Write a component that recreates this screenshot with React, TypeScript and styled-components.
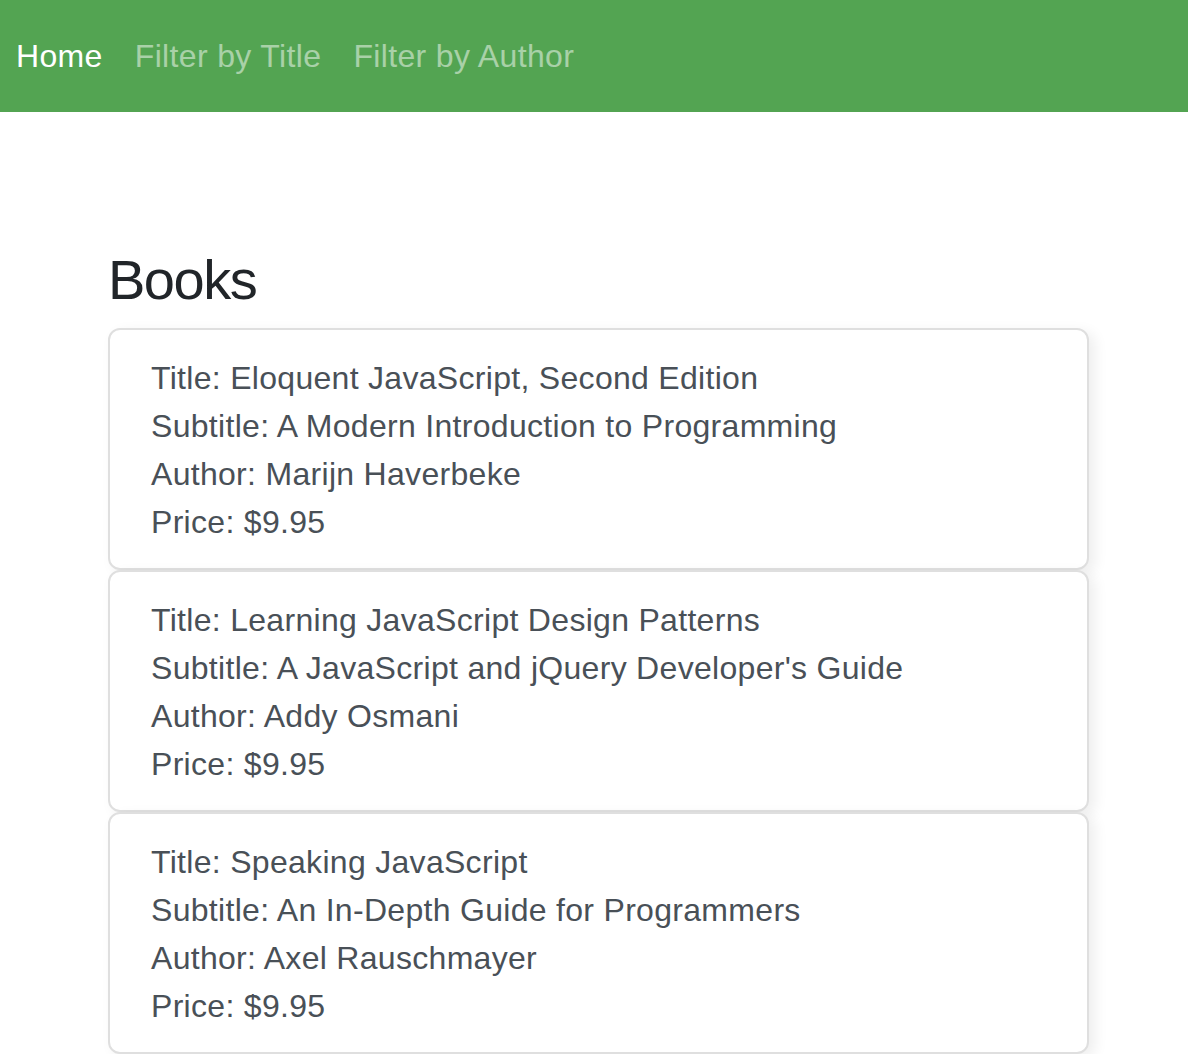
import React from "react";
import styled, { createGlobalStyle } from "styled-components";

const GlobalStyle = createGlobalStyle`
  html, body {
    margin: 0;
    padding: 0;
    background: #ffffff;
    font-family: "Liberation Sans", Arial, sans-serif;
  }
  * { box-sizing: border-box; }
`;

const NavBar = styled.nav`
  height: 112px;
  background: #53a452;
  display: flex;
  align-items: center;
  padding: 0;
`;

const NavList = styled.ul`
  display: flex;
  align-items: center;
  list-style: none;
  margin: 0;
  padding: 0;
`;

const NavLink = styled.a<{ $active?: boolean }>`
  display: block;
  padding: 0 16px;
  font-size: 32px;
  line-height: 48px;
  letter-spacing: 0.35px;
  color: ${(p) => (p.$active ? "#ffffff" : "rgba(255, 255, 255, 0.5)")};
  text-decoration: none;
  cursor: pointer;
`;

const Main = styled.main`
  width: 981px;
  margin: 0 0 0 108px;
  padding-top: 134px;
`;

const Heading = styled.h3`
  margin: 0 0 15px 0;
  font-size: 56px;
  font-weight: 500;
  line-height: 67px;
  letter-spacing: -1.5px;
  color: #212529;
`;

const CardList = styled.div`
  display: flex;
  flex-direction: column;
`;

const Card = styled.div`
  background: #ffffff;
  border: 2px solid #dfdfdf;
  border-radius: 12px;
  padding: 24px 40px 22px 41px;
  box-shadow: 6px 4px 14px rgba(0, 0, 0, 0.07);
  position: relative;
`;

const Line = styled.div`
  font-size: 32px;
  line-height: 48px;
  letter-spacing: 0.3px;
  color: #495057;
`;

const books = [
  {
    title: "Eloquent JavaScript, Second Edition",
    subtitle: "A Modern Introduction to Programming",
    author: "Marijn Haverbeke",
    price: "$9.95",
  },
  {
    title: "Learning JavaScript Design Patterns",
    subtitle: "A JavaScript and jQuery Developer's Guide",
    author: "Addy Osmani",
    price: "$9.95",
  },
  {
    title: "Speaking JavaScript",
    subtitle: "An In-Depth Guide for Programmers",
    author: "Axel Rauschmayer",
    price: "$9.95",
  },
];

export default function App() {
  return (
    <>
      <GlobalStyle />
      <NavBar>
        <NavList>
          <li><NavLink $active>Home</NavLink></li>
          <li><NavLink>Filter by Title</NavLink></li>
          <li><NavLink>Filter by Author</NavLink></li>
        </NavList>
      </NavBar>
      <Main>
        <Heading>Books</Heading>
        <CardList>
          {books.map((b) => (
            <Card key={b.title}>
              <Line>Title: {b.title}</Line>
              <Line>Subtitle: {b.subtitle}</Line>
              <Line>Author: {b.author}</Line>
              <Line>Price: {b.price}</Line>
            </Card>
          ))}
        </CardList>
      </Main>
    </>
  );
}
